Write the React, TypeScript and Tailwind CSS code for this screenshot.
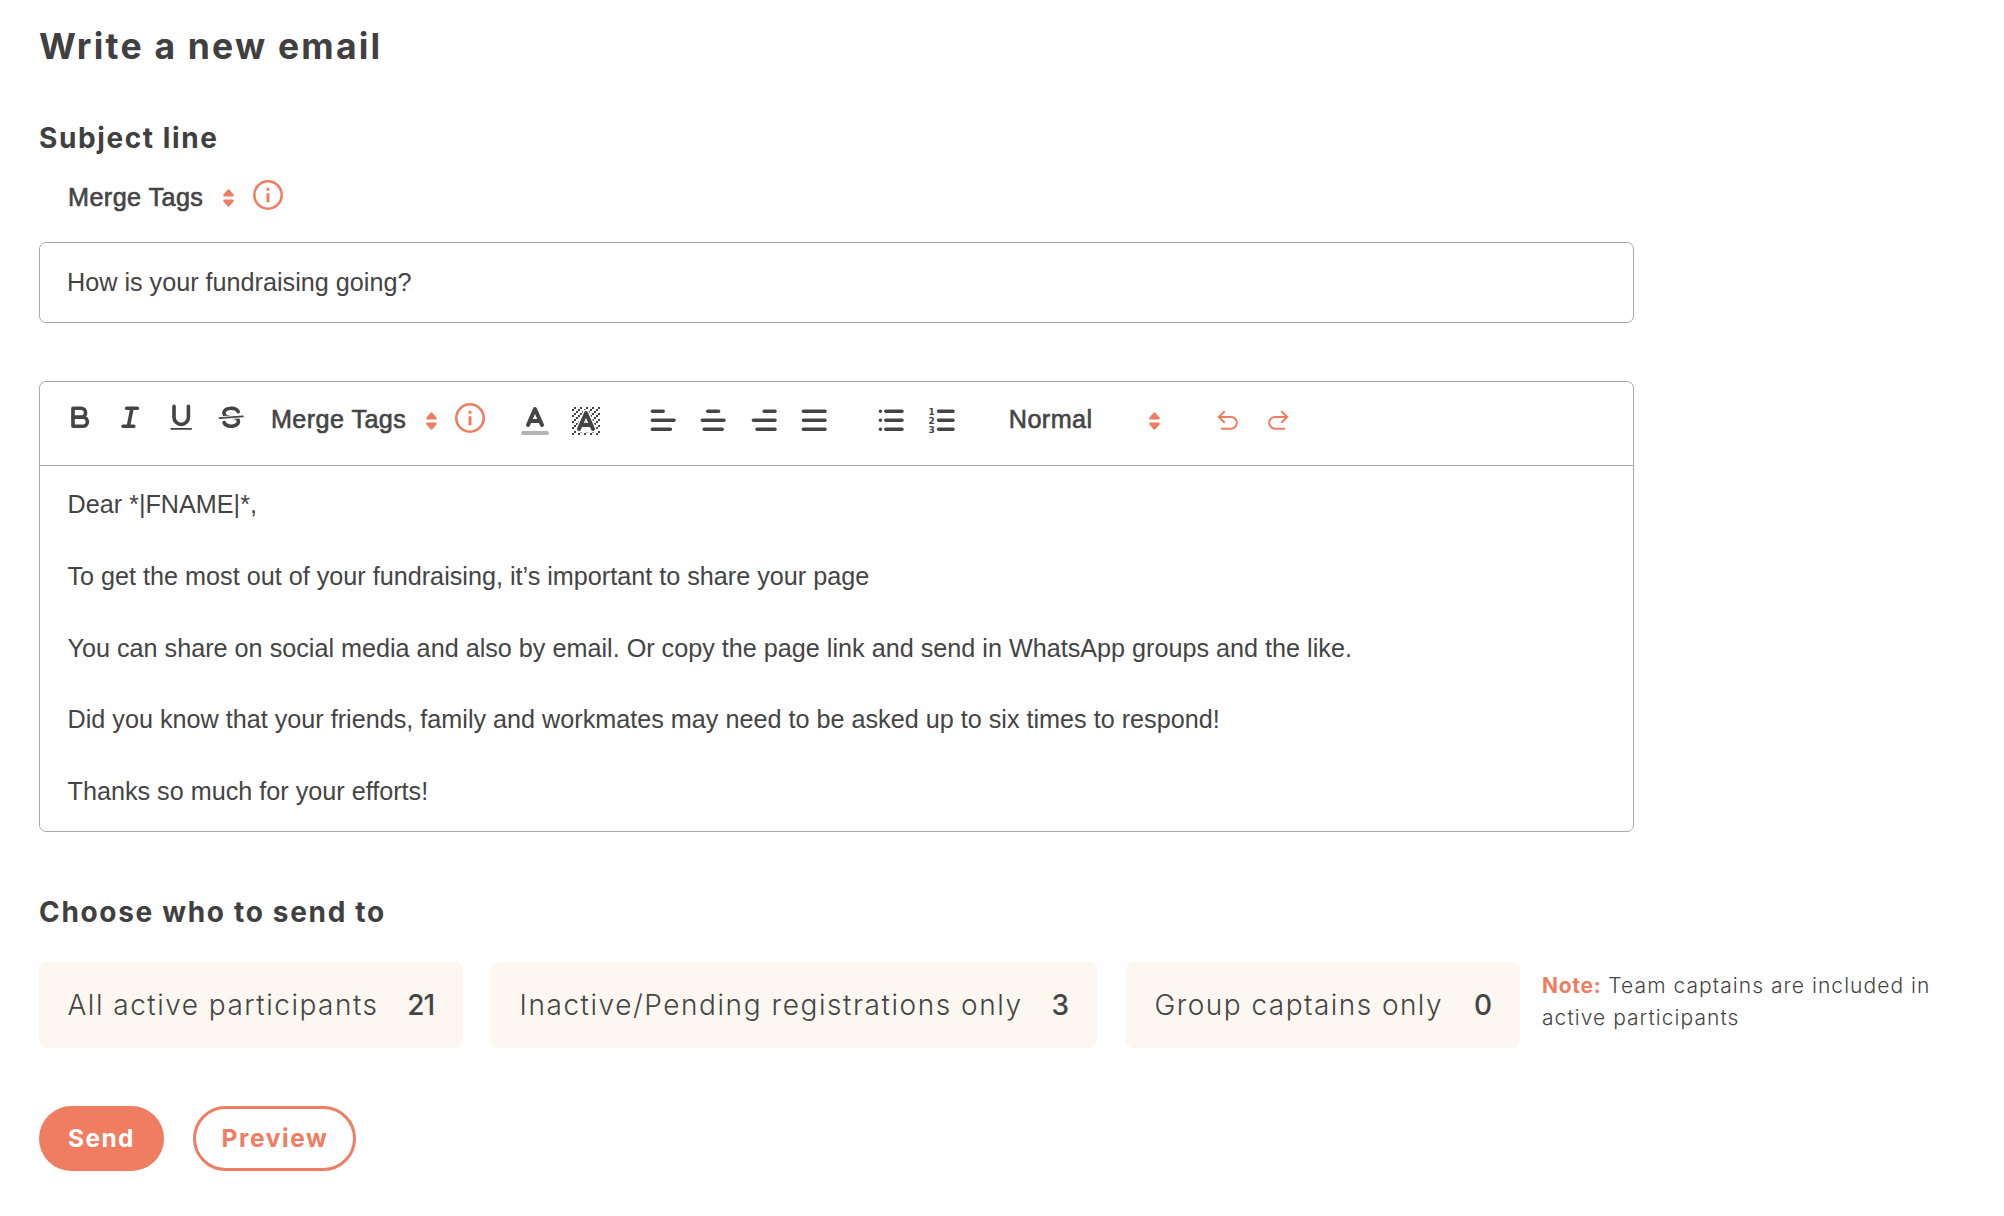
import React, { useState } from "react";

type IconProps = { children: React.ReactNode; className?: string };

const ToolIcon = ({ children, className = "w-[32.4px] h-[32.4px]" }: IconProps) => (
  <svg
    viewBox="0 0 18 18"
    className={`${className} block shrink-0`}
    fill="none"
    stroke="#444"
    strokeWidth="2"
    strokeLinecap="round"
    strokeLinejoin="round"
  >
    {children}
  </svg>
);

const SortIcon = () => (
  <svg
    viewBox="0 0 11 18"
    className="block w-[11px] h-[18px] shrink-0"
    fill="#ee7d62"
    stroke="#ee7d62"
    strokeWidth="2.4"
    strokeLinejoin="round"
  >
    <path d="M1.4 6.2 5.5 1.6 9.6 6.2Z" />
    <path d="M1.4 11.8 5.5 16.4 9.6 11.8Z" />
  </svg>
);

const InfoIcon = () => (
  <svg viewBox="0 0 30 30" className="block w-[30px] h-[30px] shrink-0">
    <circle cx="15" cy="15" r="13.7" fill="none" stroke="#ee7d62" strokeWidth="2.6" />
    <path d="M13.5 7.7h3v3h-3zM13.5 13.3h3v9h-3z" fill="#ee7d62" />
  </svg>
);

// dotted diagonal pattern behind the "background colour" icon
const hatch: [number, number][] = [];
for (let y = 2; y < 16; y++) {
  for (let x = 2; x < 16; x++) {
    if ((x + y) % 3 === 2) hatch.push([x, y]);
  }
}

const UndoIcon = ({ flip = false }: { flip?: boolean }) => (
  <svg
    viewBox="0 0 24 24"
    className={flip ? "block w-6 h-6 -scale-x-100" : "block w-6 h-6"}
    fill="none"
    stroke="#ee7d62"
    strokeWidth="2"
  >
    <path d="M8.7 3.3 2.8 9l5.9 5.7" />
    <path d="M3 9h12a5.85 5.85 0 0 1 0 11.7H5" />
  </svg>
);

const alignments = [
  ["left", "M3 4H9M3 9H15M3 14H13"],
  ["center", "M6 4H12M3 9H15M4 14H14"],
  ["right", "M9 4H15M3 9H15M5 14H15"],
  ["justify", "M3 4H15M3 9H15M3 14H15"],
];

const message = [
  "Dear *|FNAME|*,",
  "To get the most out of your fundraising, it’s important to share your page",
  "You can share on social media and also by email. Or copy the page link and send in WhatsApp groups and the like.",
  "Did you know that your friends, family and workmates may need to be asked up to six times to respond!",
  "Thanks so much for your efforts!",
];

const Toolbar = () => (
  <div className="flex items-start h-[84px] pl-[23.8px] border-b border-[#aaa]">
    <div className="flex gap-[18px] mt-[19px]">
      <button aria-label="Bold">
        <ToolIcon>
          <path d="M5 4H9.5A2.5 2.5 0 0 1 9.5 9H5Z" />
          <path d="M5 9H10.5A2.5 2.5 0 0 1 10.5 14H5Z" />
        </ToolIcon>
      </button>
      <button aria-label="Italic">
        <ToolIcon>
          <path d="M7 4H13M5 14H11M8 14 10 4" />
        </ToolIcon>
      </button>
      <button aria-label="Underline">
        <ToolIcon>
          <path d="M5 3V9a4 4 0 0 0 4 4 4 4 0 0 0 4-4V3" />
          <rect x="3" y="15" width="12" height="1" rx=".5" fill="#444" stroke="none" />
        </ToolIcon>
      </button>
      <button aria-label="Strikethrough">
        <ToolIcon>
          <path d="M15.5 8.5 2.5 9.5" strokeWidth="1" />
          <g fill="#444" stroke="none">
            <path d="M9.007,8C6.542,7.791,6,7.519,6,6.5,6,5.792,7.283,5,9,5c1.571,0,2.765.679,2.969,1.309a1,1,0,0,0,1.9-.617C13.356,4.106,11.354,3,9,3,6.2,3,4,4.538,4,6.5a3.2,3.2,0,0,0,.5,1.843Z" />
            <path d="M8.984,10C11.457,10.208,12,10.479,12,11.5c0,.708-1.283,1.5-3,1.5-1.571,0-2.765-.679-2.969-1.309a1,1,0,1,0-1.9.617C4.644,13.894,6.646,15,9,15c2.8,0,5-1.538,5-3.5a3.2,3.2,0,0,0-.5-1.843Z" />
          </g>
        </ToolIcon>
      </button>
    </div>

    <button className="flex items-center h-10 mt-[19px] ml-[23.6px]">
      <span className="w-[155px] pb-0.5 text-left tracking-[0.42px] [-webkit-text-stroke:0.6px_#444]">
        Merge Tags
      </span>
      <SortIcon />
    </button>
    <div className="mt-[21px] ml-[18px]">
      <InfoIcon />
    </div>

    <div className="flex gap-[15px] mt-[21px] ml-8">
      <button aria-label="Text colour">
        <ToolIcon className="w-9 h-9">
          <path d="M3 15H15" opacity=".4" />
          <path d="M5.5 11 9 3 12.5 11M11.63 9H6.38" />
        </ToolIcon>
      </button>
      <button aria-label="Background colour">
        <ToolIcon className="w-9 h-9">
          {hatch.map(([x, y]) => (
            <rect key={`${x}-${y}`} x={x} y={y} width="1" height="1" fill="#444" stroke="none" />
          ))}
          <path d="M5.5 13 9 5 12.5 13Z" stroke="#fff" strokeWidth="3.4" />
          <path d="M5.5 13 9 5 12.5 13M11.63 11H6.38" />
        </ToolIcon>
      </button>
    </div>

    <div className="flex gap-[18px] mt-[22.4px] ml-[43px]">
      {alignments.map(([name, d]) => (
        <button key={name} aria-label={`Align ${name}`}>
          <ToolIcon>
            <path d={d} />
          </ToolIcon>
        </button>
      ))}
    </div>

    <div className="flex gap-[18.6px] mt-[22.4px] ml-[44.4px]">
      <button aria-label="Bullet list">
        <ToolIcon>
          <path d="M6 4H15M6 9H15M6 14H15M3 4h.01M3 9h.01M3 14h.01" />
        </ToolIcon>
      </button>
      <button aria-label="Numbered list">
        <ToolIcon>
          <path d="M7 4H15M7 9H15M7 14H15" />
          <g className="font-['DejaVu_Sans',sans-serif] font-bold text-[5px]" fill="#444" stroke="none">
            <text x="1.4" y="6">1</text>
            <text x="1.4" y="11">2</text>
            <text x="1.4" y="16">3</text>
          </g>
        </ToolIcon>
      </button>
    </div>

    <button className="flex items-center h-10 mt-[18.6px] ml-[50.5px]">
      <span className="w-[140px] pb-0.5 text-left tracking-[0.42px] [-webkit-text-stroke:0.6px_#444]">
        Normal
      </span>
      <span className="pt-px">
        <SortIcon />
      </span>
    </button>

    <div className="flex gap-[26px] mt-[26px] ml-14">
      <button aria-label="Undo">
        <UndoIcon />
      </button>
      <button aria-label="Redo">
        <UndoIcon flip />
      </button>
    </div>
  </div>
);

const groups = [
  { label: "All active participants", count: 21, box: "w-[424px]", text: "tracking-[1.5px]" },
  { label: "Inactive/Pending registrations only", count: 3, box: "w-[606px] ml-7", text: "tracking-[1.56px]" },
  { label: "Group captains only", count: 0, box: "w-[394px] ml-[29px]", text: "tracking-[1.45px]" },
];

export default function App() {
  const [subject, setSubject] = useState("How is your fundraising going?");

  return (
    <div className="min-h-screen bg-white pl-[39px] pt-[25px] text-[25.2px] text-[#444] font-['Liberation_Sans',Arial,sans-serif]">
      <h1 className="h-11 leading-[44px] text-[35.5px] font-bold tracking-[2.2px] text-[#404040] font-['Inter',sans-serif]">
        Write a new email
      </h1>

      <h2 className="mt-[51px] h-9 leading-9 text-[28px] font-bold tracking-[1.6px] text-[#404040] font-['Inter',sans-serif]">
        Subject line
      </h2>
      <div className="flex items-center h-10 mt-[21px] pl-[29px]">
        <span className="w-[155px] pt-0.5 tracking-[0.42px] [-webkit-text-stroke:0.6px_#444]">
          Merge Tags
        </span>
        <span className="pt-0.5">
          <SortIcon />
        </span>
        <span className="ml-[18.5px] pb-1">
          <InfoIcon />
        </span>
      </div>
      <input
        value={subject}
        onChange={(e) => setSubject(e.target.value)}
        className="block w-[1595px] h-[81px] mt-[25px] px-[27px] border border-[#aaa] rounded-[7px] outline-none"
      />

      <div className="w-[1595px] h-[451px] mt-[58px] border border-[#aaa] rounded-[7px]">
        <Toolbar />
        <div className="pt-[21px] pl-[27.5px] leading-[35.9px]">
          {message.map((line) => (
            <p key={line} className="mb-[35.9px]">
              {line}
            </p>
          ))}
        </div>
      </div>

      <h2 className="mt-[62px] h-9 leading-9 text-[28px] font-bold tracking-[1.68px] text-[#404040] font-['Inter',sans-serif]">
        Choose who to send to
      </h2>
      <div className="flex h-[86px] mt-8 font-['Inter',sans-serif]">
        {groups.map((g) => (
          <button
            key={g.label}
            className={`${g.box} flex items-center justify-between shrink-0 pl-[28.5px] pr-[29px] rounded-lg bg-[#fdf7f1] text-[28px]`}
          >
            <span className={`${g.text} font-[350] whitespace-nowrap`}>{g.label}</span>
            <span className="font-medium tracking-[-1px]">{g.count}</span>
          </button>
        ))}
        <p className="ml-[22px] mt-2 text-[21px] leading-8 font-[350] tracking-[1.05px] whitespace-nowrap">
          <b className="font-bold tracking-[0.7px] text-[#ee7d62]">Note:</b> Team captains are included in
          <br />
          active participants
        </p>
      </div>

      <div className="flex mt-[58px] font-['Inter',sans-serif] text-[24.5px] font-bold">
        <button className="w-[125px] h-[65px] pb-px rounded-full bg-[#ee7d62] text-white tracking-[1.4px]">
          Send
        </button>
        <button className="w-[163px] h-[65px] ml-[29px] pl-px pb-px rounded-full border-3 border-[#ee7d62] text-[#ee7d62] tracking-[1.6px]">
          Preview
        </button>
      </div>
    </div>
  );
}
